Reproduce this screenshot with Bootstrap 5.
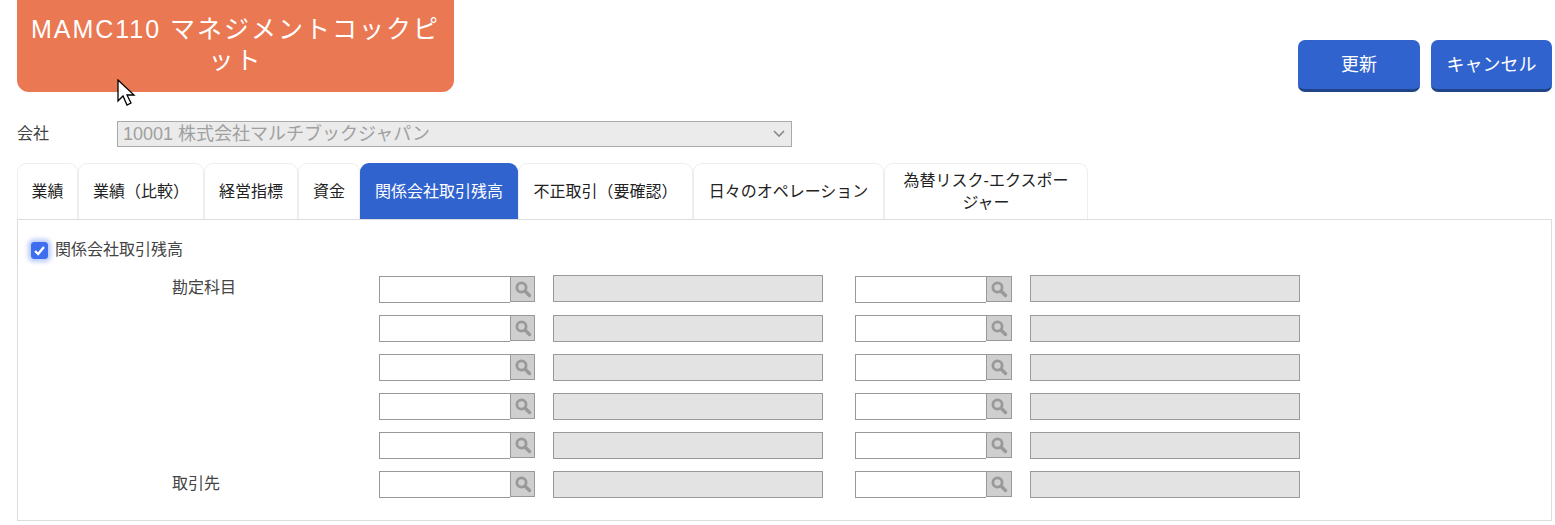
<!DOCTYPE html>
<html lang="ja">
<head>
<meta charset="utf-8">
<title>MAMC110</title>
<link href="https://cdn.jsdelivr.net/npm/bootstrap@5.3.0/dist/css/bootstrap.min.css" rel="stylesheet">
<style>
html,body{height:525px;overflow:hidden}
body{font-family:"Liberation Sans","Noto Sans CJK JP",sans-serif;font-size:16px;color:#444;background:#fff;position:relative}
.page-wrap{padding:0 3px 0 17px}
.head-bar{height:121px;align-items:flex-start}
.title-box{width:437px;height:92px;background:#ea7852;color:#fff;border-radius:0 0 12px 12px;font-size:25px;letter-spacing:2px;line-height:31px;text-align:center;padding:14px 10px 0}
.act-gap{gap:11px}
.act-btn{width:122px;height:52px;margin-top:40px;background:#3063ce;color:#fff;border:0;border-bottom:3px solid #1f4488;border-radius:7px;font-size:18px;padding:2px 0 0}
.act-btn:last-child{width:121px}
.act-btn:hover{background:#3063ce;color:#fff}
.co-row{height:42px;align-items:flex-start}
.co-label{width:100px;line-height:26px;font-size:16px}
.co-select{width:675px;height:26px;border:1px solid #aaa;background:#ebebeb;color:#a0a0a0;font-size:18px;line-height:24px;padding:0 5px;position:relative}
.co-select svg{position:absolute;right:6px;top:8px}
.tab-row{height:57px;border-bottom:1px solid #ddd;flex-wrap:nowrap}
.tab-item{height:56px;background:#fff;border:1px solid #eee;border-bottom:0;border-radius:9px 9px 0 0;color:#222;font-size:16px;line-height:22px;display:flex;align-items:center;justify-content:center;text-align:center;padding:0 12px;flex:none}
.tab-item:nth-child(1){width:61px}
.tab-item:nth-child(2){width:126px}
.tab-item:nth-child(3){width:94px}
.tab-item:nth-child(4){width:62px}
.tab-item:nth-child(5){width:158px}
.tab-item:nth-child(6){width:175px}
.tab-item:nth-child(7){width:191px}
.tab-item:nth-child(8){width:204px;padding:0 14px}
.tab-item.is-on{background:#3063ce;color:#fff;border-color:#3063ce}
.pane-box{width:1535px;height:301px;border:1px solid #ddd;border-top:0;padding:21px 13px 0}
.chk-line{height:18px;line-height:18px;font-size:16px;margin-bottom:16px}
.chk-line .form-check-input{width:17px;height:17px;margin:0 7px 0 0;background-color:#3d6ef0;border-color:#3d6ef0;box-shadow:0 0 4px 3px rgba(61,110,240,.35);border-radius:3px;flex:none;background-size:100%;background-image:url("data:image/svg+xml,%3Csvg xmlns='http://www.w3.org/2000/svg' viewBox='0 0 17 17'%3E%3Cpath d='M3.5 9l3.5 3.5 6.5-8' fill='none' stroke='%23fff' stroke-width='2.6'/%3E%3C/svg%3E")}
.field-row{height:27px;margin-bottom:12px;align-items:flex-start}
.field-row:first-child{margin-bottom:13px}
.field-row:first-child .code-in,.field-row:first-child .srch-btn{margin-top:1px}
.field-lbl{width:348px;padding-left:141px;flex:none;line-height:26px;font-size:16px;white-space:nowrap}
.code-in{width:131px;height:27px;border:1px solid #999;border-right:0;background:#fff;flex:none}
.srch-btn{width:25px;height:26px;border:1px solid #999;background:#cfcfcf;flex:none;display:flex;align-items:center;justify-content:center}
.name-out{width:270px;height:27px;border:1px solid #999;background:#e3e3e3;margin-left:18px;flex:none}
.group-gap{width:32px;flex:none}
.field-row .group-gap~.srch-btn{width:26px}
.mouse-arrow{position:absolute;left:117px;top:79px}
</style>
</head>
<body>
<div class="page-wrap">
  <div class="d-flex head-bar justify-content-between">
    <div class="title-box">MAMC110 マネジメントコックピット</div>
    <div class="d-flex act-gap">
      <button class="btn act-btn" type="button">更新</button>
      <button class="btn act-btn" type="button">キャンセル</button>
    </div>
  </div>
  <div class="d-flex co-row">
    <div class="co-label">会社</div>
    <div class="co-select">10001 株式会社マルチブックジャパン
      <svg width="12" height="8" viewBox="0 0 12 8"><path d="M1 1l5 5 5-5" fill="none" stroke="#888" stroke-width="1.6"/></svg>
    </div>
  </div>
  <div class="d-flex tab-row">
    <div class="tab-item">業績</div>
    <div class="tab-item">業績（比較）</div>
    <div class="tab-item">経営指標</div>
    <div class="tab-item">資金</div>
    <div class="tab-item is-on">関係会社取引残高</div>
    <div class="tab-item">不正取引（要確認）</div>
    <div class="tab-item">日々のオペレーション</div>
    <div class="tab-item">為替リスク-エクスポージャー</div>
  </div>
  <div class="pane-box">
    <div class="d-flex align-items-center chk-line">
      <input class="form-check-input" type="checkbox" checked aria-label="関係会社取引残高">
      <span>関係会社取引残高</span>
    </div>
    <div id="rows"></div>
  </div>
</div>
<svg class="mouse-arrow" width="20" height="28" viewBox="0 0 20 28"><path d="M1 1v21l5-5 4 9 4-2-4-8h7z" fill="#fff" stroke="#000" stroke-width="1.3"/></svg>
<script>
const ic='<svg width="18" height="18" viewBox="0 0 18 18"><circle cx="7.5" cy="7.5" r="4.6" fill="none" stroke="#999" stroke-width="2.8"/><path d="M11 11l4.5 4.5" stroke="#999" stroke-width="3.4" stroke-linecap="round"/></svg>';
const grp='<div class="code-in"></div><div class="srch-btn">'+ic+'</div><div class="name-out"></div>';
const labels=['勘定科目','','','','','取引先'];
document.getElementById('rows').innerHTML=labels.map(l=>'<div class="d-flex field-row"><div class="field-lbl">'+l+'</div>'+grp+'<div class="group-gap"></div>'+grp+'</div>').join('');
</script>
<script src="https://cdn.jsdelivr.net/npm/bootstrap@5.3.0/dist/js/bootstrap.bundle.min.js"></script>
</body>
</html>
